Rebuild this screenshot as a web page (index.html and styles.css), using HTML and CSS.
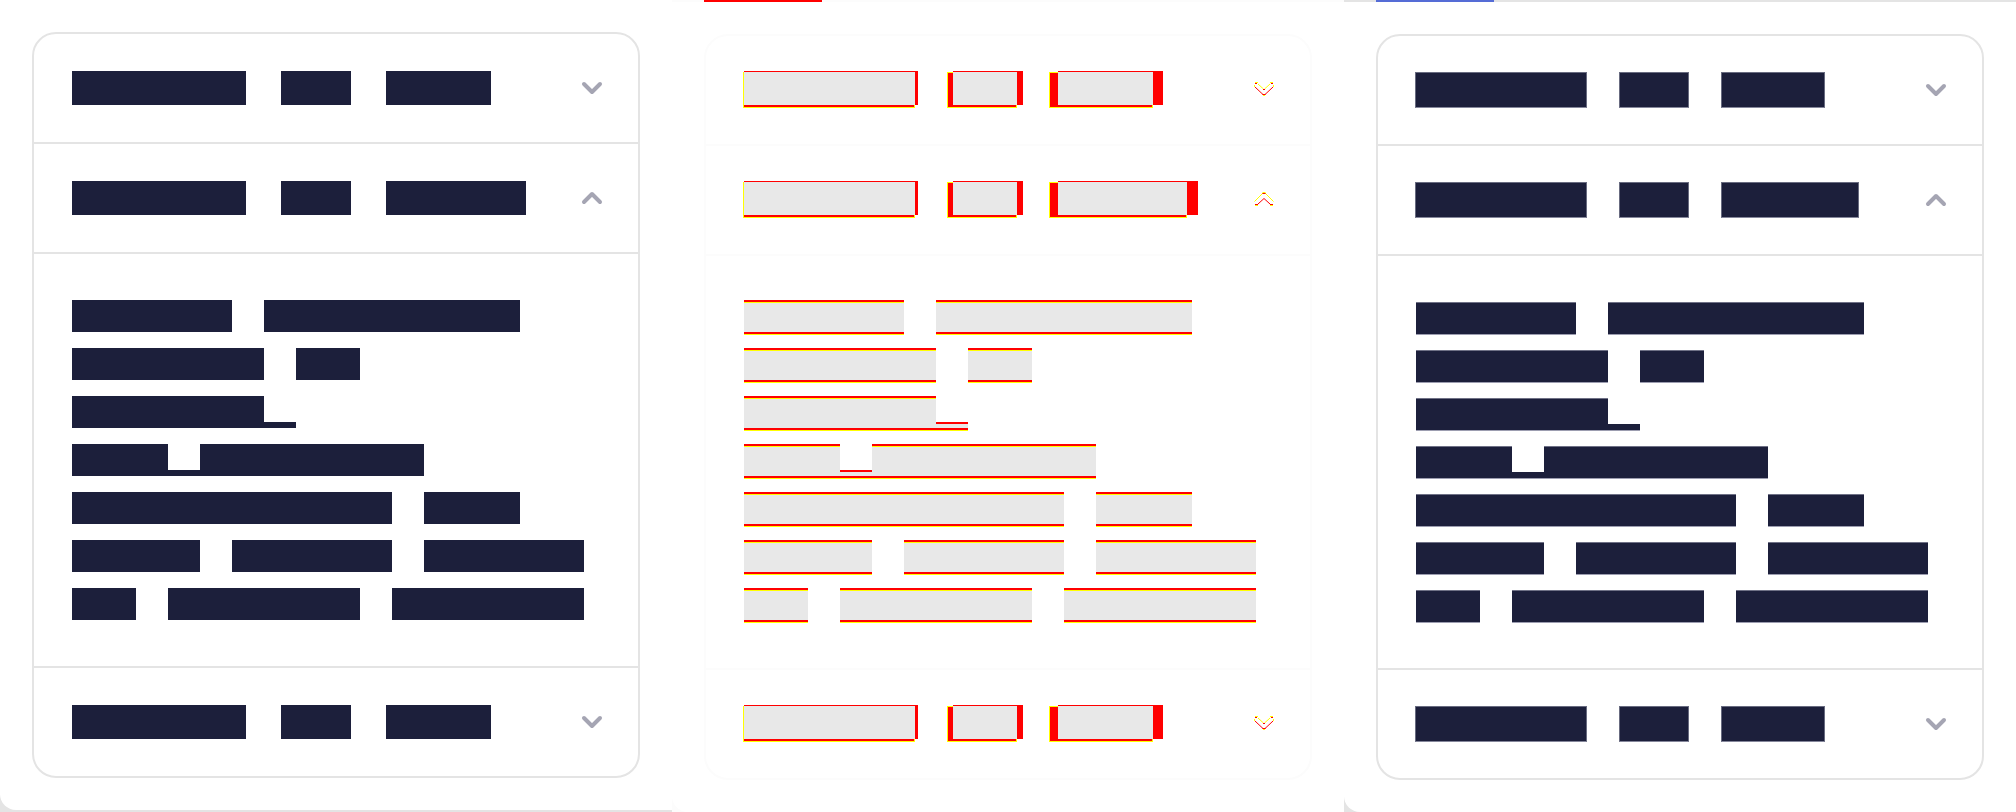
FILE: index.html
```html
<!DOCTYPE html>
<html lang="en">
<head>
<meta charset="utf-8">
<title>Accordion comparison</title>
<link rel="stylesheet" href="styles.css">
</head>
<body>
<main class="compare" id="compare"></main>
<script src="script.js"></script>
</body>
</html>
```

FILE: styles.css
```css
* { box-sizing: border-box; }

body {
  margin: 0;
  background: #fff;
  font-family: "Liberation Sans", sans-serif;
}

.compare {
  display: grid;
  grid-template-columns: repeat(3, minmax(0, 1fr));
  --ink: #1c1f3b;
  --line: #e4e4e4;
}

.pane { background: var(--edge); }
.pane-before { --edge: #e4e4e4; padding-bottom: 2px; }
.pane-diff { --edge: #fcfcfc; --line: #fcfcfc; --tab: #f00; }
.pane-after { --edge: #e4e4e4; --tab: #556cd6; }

.surface {
  height: 100%;
  background: #fff;
  border-bottom-left-radius: 16px;
  overflow: hidden;
}

.tabs {
  height: 2px;
  padding: 0 32px;
  background: var(--line);
}
.tab {
  width: 118px;
  height: 2px;
  background: var(--tab);
}

.card {
  margin: 32px;
  border: 2px solid var(--line);
  border-radius: 24px;
}

.item + .item { border-top: 2px solid var(--line); }

.header {
  display: flex;
  align-items: center;
  justify-content: space-between;
  width: 100%;
  height: 108px;
  padding: 0 36px 0 38px;
  border: 0;
  background: none;
}
.pane-diff .header, .pane-after .header { padding-left: 37px; }

.title { display: flex; gap: 35px; }
.pane-after .title { gap: 32px; }

.chevron { display: block; overflow: visible; fill: none; }
.chevron-solid {
  stroke: #a5a5b3;
  stroke-width: 4;
  stroke-linecap: round;
  stroke-linejoin: round;
}
.mark-old { stroke: #ff0; }
.mark-new { stroke: #f00; }

.block { height: 34px; background: var(--ink); }
.pane-after .title .block {
  height: 36px;
  border: 1px solid #686b80;
  border-bottom-color: #85879b;
}

.pane-diff .title { gap: 0; }
.overlay { display: grid; height: 38px; margin-right: 29px; }
.overlay + .overlay { margin-right: 26px; }
.overlay:last-child { margin-right: 0; }
.overlay > span { grid-area: 1 / 1; }
.moved { margin: 1px 0; border: 1px solid #ff0; background: #f00; }
.base { height: 34px; background: #f00; }
.common { height: 33px; margin-top: 1px; background: #e8e8e8; }

.content {
  display: grid;
  gap: 16px;
  padding: 46px 38px;
  border-top: 2px solid var(--line);
}
.pane-diff .content { gap: 13px; padding: 44px 38px 45px; }
.pane-after .content { gap: 15px; padding-bottom: 45px; }

.row { display: flex; align-items: flex-end; }
.word { height: 32px; background: var(--ink); }
.word-low { height: 6px; }

.pane-diff .word {
  height: 35px;
  background: linear-gradient(#f00 2px, #ff0 2px 3px, #e8e8e8 3px 32px, #f00 32px 34px, #ff0 34px);
}
.pane-diff .word-low {
  height: 9px;
  background: linear-gradient(#f00 2px, #e8e8e8 2px 6px, #f00 6px 8px, #ff0 8px);
}
.pane-after .word {
  height: 33px;
  border: solid #6f7186;
  border-width: 1px 0;
  border-bottom-color: #9c9db0;
}
.pane-after .word-low { height: 7px; border-top-color: var(--ink); }
.compare .word-space { background: none; border: 0; }
```

FILE: script.js
```js
// Each row is a list of [kind, length in characters].
const CELL = 32;
const rows = [
  [["", 5], ["space", 1], ["", 8]],
  [["", 6], ["space", 1], ["", 2]],
  [["", 6], ["low", 1]],
  [["", 3], ["low", 1], ["", 7]],
  [["", 10], ["space", 1], ["", 3]],
  [["", 4], ["space", 1], ["", 5], ["space", 1], ["", 5]],
  [["", 2], ["space", 1], ["", 6], ["space", 1], ["", 6]]
];

const solid = {
  before: { short: [174, 70, 105], long: [174, 70, 140] },
  after: { short: [172, 70, 104], long: [172, 70, 138] }
};

// [total width, base inset on the left, moved inset on the right]
const overlays = {
  short: [[175, 1, 3], [76, 6, 6], [114, 9, 10]],
  long: [[175, 1, 3], [76, 6, 6], [149, 9, 11]]
};

function title(kind, size) {
  if (kind !== "diff") {
    return solid[kind][size].map(w => `<span class="block" style="width:${w}px"></span>`).join("");
  }
  return overlays[size].map(([w, left, right]) =>
    `<span class="overlay" style="width:${w}px">
      <span class="moved" style="margin-right:${right}px"></span>
      <span class="base" style="margin-left:${left}px"></span>
      <span class="common" style="margin-left:${left}px;margin-right:${right}px"></span>
    </span>`).join("");
}

function chevron(kind, open) {
  if (kind !== "diff") {
    const d = open ? "M2 10l8-8 8 8" : "M2 2l8 8 8-8";
    return `<svg class="chevron chevron-solid" width="20" height="12" viewBox="0 0 20 12" aria-hidden="true"><path d="${d}"/></svg>`;
  }
  const marks = open
    ? `<path class="mark-old" d="M.5 9.5L9 1M11 1l8.500 8.500M8.500.5h3M1 13.500h3M16 13.500h3"/>
       <path class="mark-new" d="M8.500 1.500h3M4 12l6-5.500 6 5.500M1 12.500h3M16 12.500h3"/>`
    : `<path class="mark-old" d="M1 .5h3M16 .5h3M4 2l5.500 5M16 2l-5.500 5M.5 3v2M19.500 3v2M9 13.500h2"/>
       <path class="mark-new" d="M1 1.500h2M17 1.500h2M9 7.500h2M1 5l8 7.500M19 5l-8 7.500M8.500 12.500h3"/>`;
  return `<svg class="chevron" width="20" height="16" viewBox="0 0 20 16" aria-hidden="true">${marks}</svg>`;
}

function item(kind, open) {
  const content = rows.map(row => `<div class="row">${row.map(([type, n]) =>
    `<span class="word${type ? " word-" + type : ""}" style="width:${n * CELL}px"></span>`).join("")}</div>`).join("");
  return `<section class="item">
    <button class="header" type="button" aria-label="Accordion item" aria-expanded="${open}">
      <span class="title">${title(kind, open ? "long" : "short")}</span>${chevron(kind, open)}
    </button>${open ? `<div class="content">${content}</div>` : ""}
  </section>`;
}

document.getElementById("compare").innerHTML = ["before", "diff", "after"].map(kind =>
  `<div class="pane pane-${kind}"><div class="surface">
    ${kind === "before" ? "" : '<div class="tabs"><div class="tab"></div></div>'}
    <div class="card">${item(kind, false)}${item(kind, true)}${item(kind, false)}</div>
  </div></div>`).join("");
```
